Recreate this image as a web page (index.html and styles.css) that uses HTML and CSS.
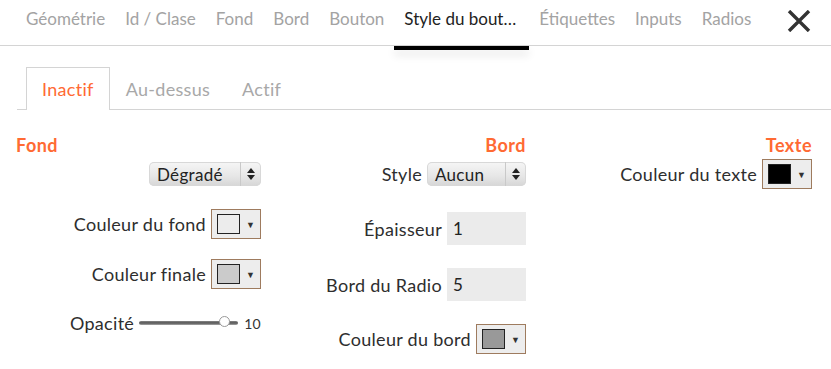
FILE: index.html
```html
<!DOCTYPE html>
<html lang="fr">
<head>
  <meta charset="UTF-8">
  <title>Style du bouton</title>
  <link rel="stylesheet" href="styles.css">
</head>
<body>
  <nav class="topbar">
    <a class="tab">Géométrie</a>
    <a class="tab">Id / Clase</a>
    <a class="tab">Fond</a>
    <a class="tab">Bord</a>
    <a class="tab">Bouton</a>
    <a class="tab active"><span>Style du bouton</span></a>
    <a class="tab">Étiquettes</a>
    <a class="tab">Inputs</a>
    <a class="tab">Radios</a>
    <button class="close">
      <svg width="24" height="22" viewBox="0 0 24 22"><path d="M2 1 L22 21 M22 1 L2 21" stroke="#333" stroke-width="3.4" fill="none"/></svg>
    </button>
  </nav>

  <div class="subtabs">
    <a class="subtab active">Inactif</a>
    <a class="subtab">Au-dessus</a>
    <a class="subtab">Actif</a>
  </div>

  <div class="panel">
    <div class="col col-fond">
      <h3>Fond</h3>
      <div class="rows">
        <div class="field">
          <div class="select wide"><span>Dégradé</span><i class="arrows"></i></div>
        </div>
        <div class="field">
          <label>Couleur du fond</label>
          <div class="color"><span class="swatch" style="background:#ececec"></span><b>▼</b></div>
        </div>
        <div class="field">
          <label>Couleur finale</label>
          <div class="color"><span class="swatch" style="background:#cbcbcb"></span><b>▼</b></div>
        </div>
        <div class="field slim">
          <label>Opacité</label>
          <div class="slider"><div class="thumb"></div></div>
          <span class="value">10</span>
        </div>
      </div>
    </div>

    <div class="col col-bord">
      <h3>Bord</h3>
      <div class="rows">
        <div class="field">
          <label>Style</label>
          <div class="select"><span>Aucun</span><i class="arrows"></i></div>
        </div>
        <div class="field">
          <label>Épaisseur</label>
          <input class="text" type="text" value="1">
        </div>
        <div class="field">
          <label>Bord du Radio</label>
          <input class="text" type="text" value="5">
        </div>
        <div class="field">
          <label>Couleur du bord</label>
          <div class="color"><span class="swatch" style="background:#999999"></span><b>▼</b></div>
        </div>
      </div>
    </div>

    <div class="col col-texte">
      <h3>Texte</h3>
      <div class="rows">
        <div class="field">
          <label>Couleur du texte</label>
          <div class="color"><span class="swatch" style="background:#000"></span><b>▼</b></div>
        </div>
      </div>
    </div>
  </div>
</body>
</html>
```

FILE: styles.css
```css
body { margin: 0; background: #fff; font-family: Lato, "Open Sans", sans-serif; color: #333; }

.topbar { display: flex; height: 45px; border-bottom: 1px solid #d4d4d4; padding-left: 16px; }
.tab { padding: 8px 10px 0; font-size: 17px; color: #a3a3a3; line-height: 22px; position: relative; white-space: nowrap; }
.tab.active { color: #222; width: 115px; }
.tab.active span { display: block; overflow: hidden; text-overflow: ellipsis; }
.tab.active::after { content: ""; position: absolute; left: 0; right: 0; bottom: -5px; height: 4px; background: #000; box-shadow: 0 5px 8px rgba(0,0,0,.12); }
.close { margin-left: auto; margin-right: 20px; margin-top: 10px; align-self: flex-start; border: 0; background: none; padding: 0; }

.subtabs { display: flex; margin: 21px 0 0 17px; padding-left: 9px; border-bottom: 1px solid #d4d4d4; height: 42px; }
.subtab { padding: 0 15px; font-size: 18px; letter-spacing: .3px; line-height: 42px; color: #a8a8a8; border: 1px solid transparent; border-bottom: 0; }
.subtab.active { color: #ff6a33; background: #fff; border-color: #d4d4d4; height: 42px; margin-bottom: -1px; }

.panel { display: grid; grid-template-columns: 245px 245px 1fr; column-gap: 20px; padding: 25px 19px 0 16px; }
.col { display: flex; flex-direction: column; align-items: flex-end; }
.rows { display: flex; flex-direction: column; align-items: flex-end; }
.col-fond .rows { row-gap: 20px; }
.col-bord .rows { row-gap: 23px; }
h3 { margin: 0 0 4px; font-size: 18px; letter-spacing: .5px; line-height: 20px; font-weight: 700; color: #ff6a33; }
.col-fond h3 { align-self: flex-start; }

.field { display: flex; align-items: center; min-height: 30px; font-size: 18px; letter-spacing: .3px; }
.field.slim { min-height: 24px; margin-top: 2px; }
.field label { margin-right: 5px; color: #2e2e2e; }

.select { display: flex; align-items: center; height: 24px; width: 99px; box-sizing: border-box; border-radius: 5px; background: linear-gradient(#f6f6f6, #e6e6e6 60%, #d6d6d6); box-shadow: inset 0 0 0 1px #d8d8d8; font-size: 17px; color: #222; }
.select.wide { width: 112px; }
.select span { flex: 1; padding-left: 8px; }
.arrows { width: 20px; height: 24px; border-left: 1px solid #c9c9c9; position: relative; }
.arrows::before, .arrows::after { content: ""; position: absolute; left: 6px; border-left: 4px solid transparent; border-right: 4px solid transparent; }
.arrows::before { top: 6px; border-bottom: 5px solid #222; }
.arrows::after { top: 13px; border-top: 5px solid #222; }

.color { display: flex; align-items: center; width: 50px; height: 30px; box-sizing: border-box; border: 1px solid #9e7b5e; background: #ededed; padding-left: 5px; }
.swatch { width: 21px; height: 18px; border: 1px solid #222; }
.color b { font-size: 9px; margin-left: 6px; color: #333; }

.text { width: 79px; height: 33px; box-sizing: border-box; border: 0; background: #ebebeb; font-family: Lato, sans-serif; font-size: 17px; padding-left: 6px; color: #222; }

.slider { position: relative; width: 99px; height: 4px; border-radius: 2px; background: linear-gradient(#888, #555 50%, #aaa); }
.thumb { position: absolute; left: 80px; top: -5px; width: 11px; height: 11px; border-radius: 50%; background: #fff; border: 1px solid #999; box-sizing: border-box; }
.value { font-size: 14px; margin-left: 6px; color: #333; }
```
